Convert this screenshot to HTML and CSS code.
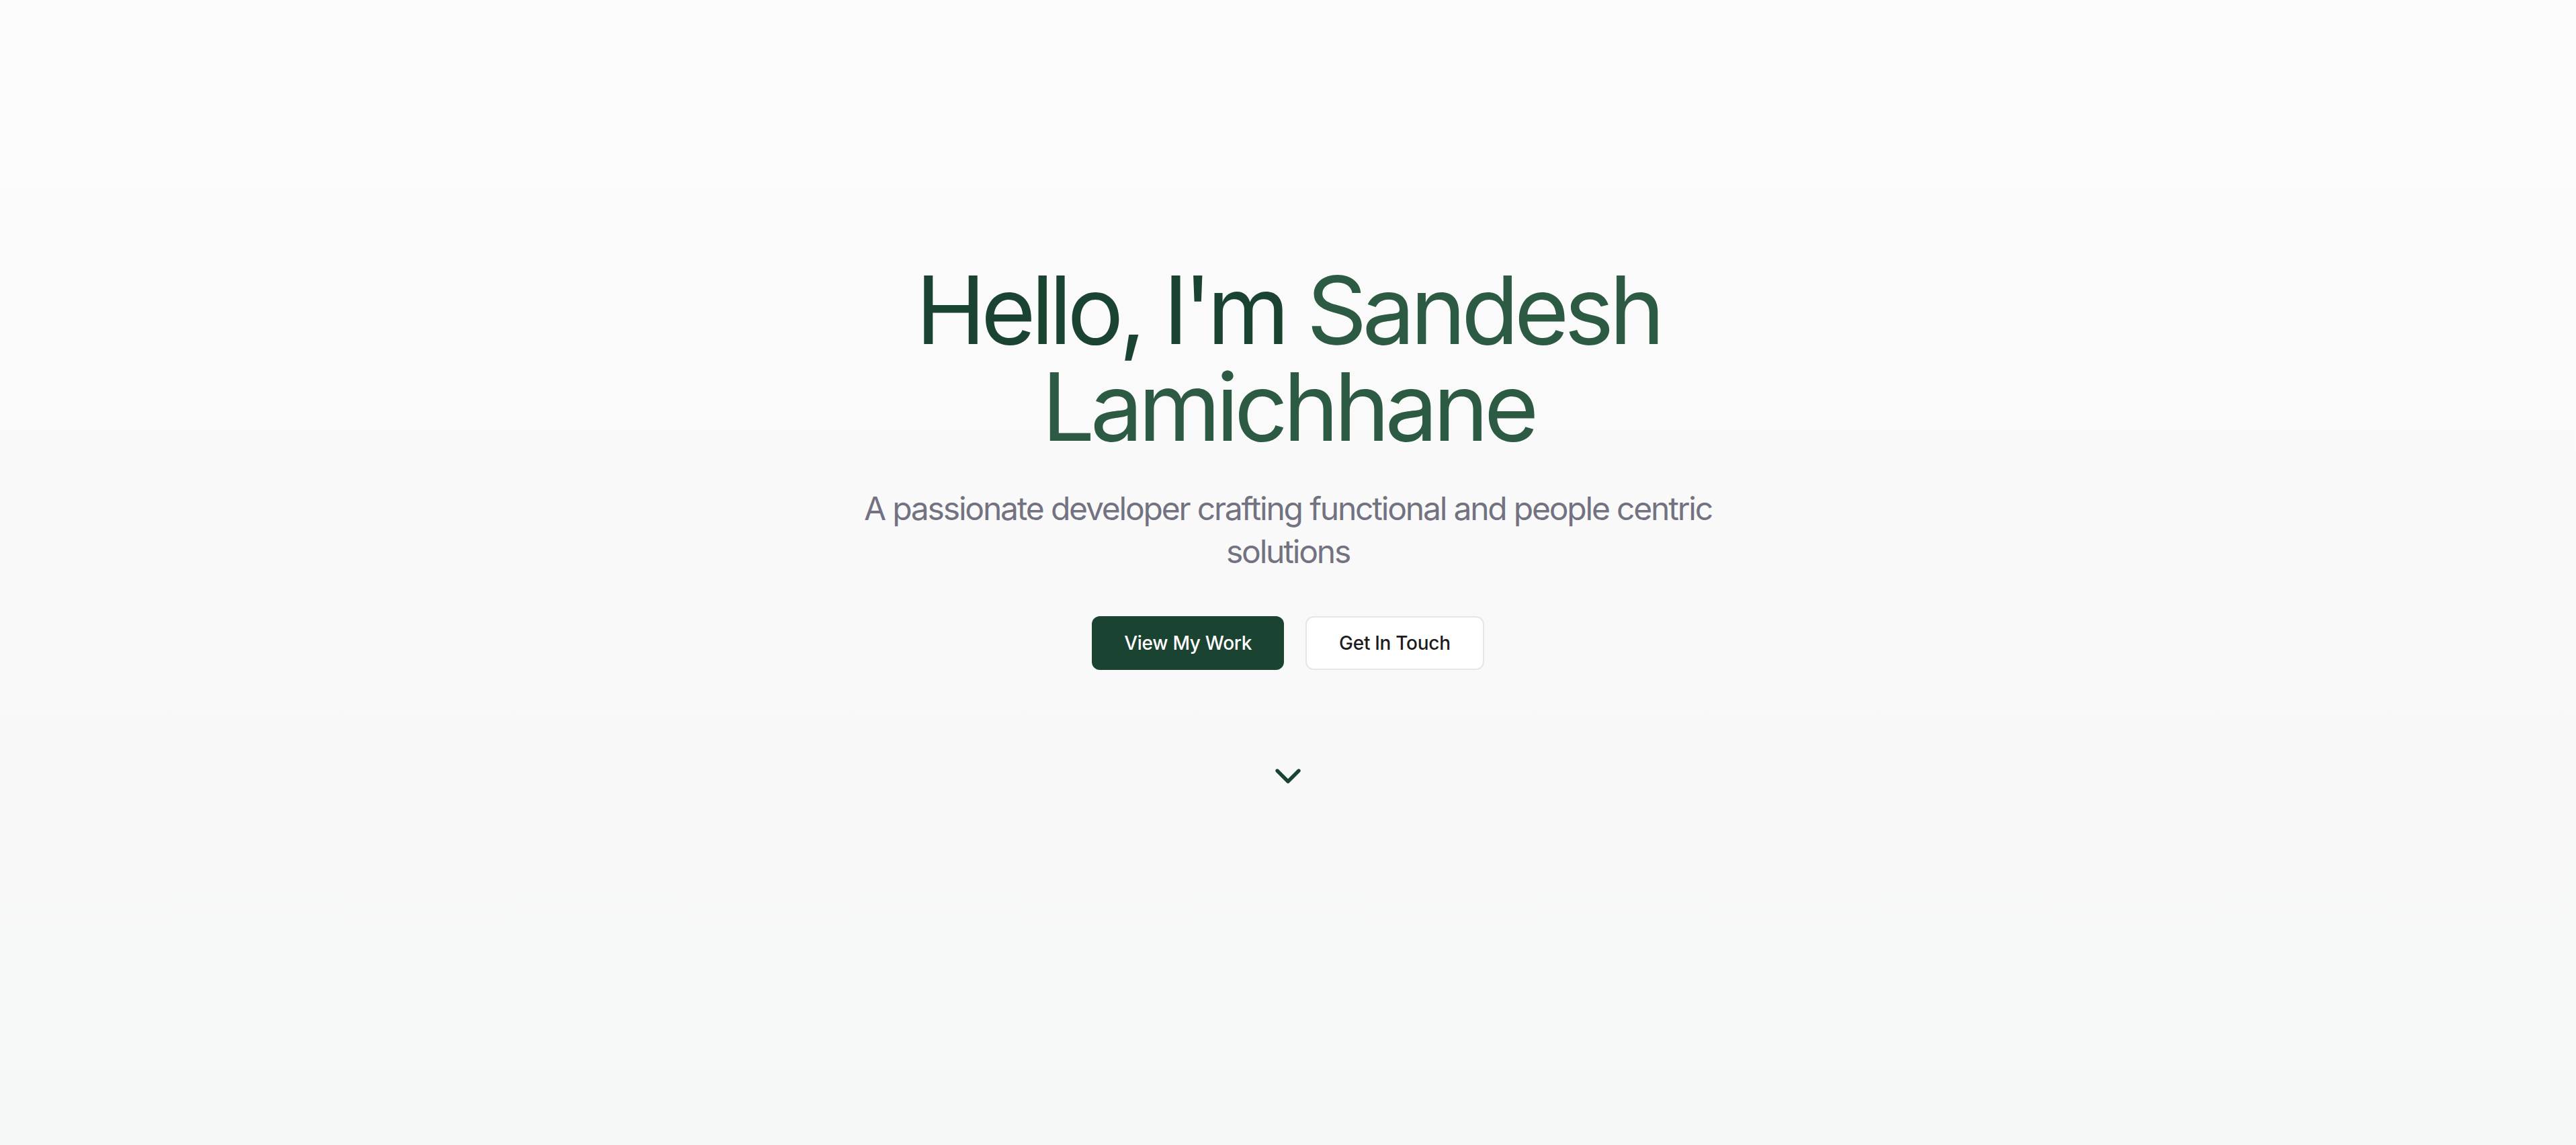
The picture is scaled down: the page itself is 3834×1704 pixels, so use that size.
FILE: index.html
```html
<!DOCTYPE html>
<html lang="en">
<head>
<meta charset="utf-8">
<title>Sandesh Lamichhane</title>
<link rel="stylesheet" href="styles.css">
</head>
<body>
<main class="hero">
  <h1 class="hero-title"><span class="title-dark">Hello, I'm</span> <span class="title-light">Sandesh Lamichhane</span></h1>
  <p class="hero-sub">A passionate developer crafting functional and people centric solutions</p>
  <div class="hero-actions">
    <a class="btn btn-primary" href="#projects">View My Work</a>
    <a class="btn btn-outline" href="#contact">Get In Touch</a>
  </div>
  <a class="scroll-down" href="#about" aria-label="Scroll down">
    <svg width="64" height="64" viewBox="0 0 24 24" fill="none" stroke="currentColor" stroke-width="2" stroke-linecap="round" stroke-linejoin="round"><path d="m6 9 6 6 6-6"/></svg>
  </a>
</main>
</body>
</html>
```

FILE: styles.css
```css
html, body {
  margin: 0;
  padding: 0;
}
body {
  font-family: Inter, "Noto Sans", "Liberation Sans", sans-serif;
  background: linear-gradient(to bottom, #fcfcfc 0%, #f9f9f9 50%, #f6f7f7 100%);
  min-height: 1704px;
}
.hero {
  min-height: 1704px;
  box-sizing: border-box;
  padding-top: 389px;
  display: flex;
  flex-direction: column;
  align-items: center;
  text-align: center;
}
.hero-title {
  margin: 0 0 48px;
  max-width: 1792px;
  font-size: 140px;
  line-height: 144px;
  font-weight: 400;
  letter-spacing: -7px;
}
.title-dark { color: #1b4332; }
.title-light { color: #2d5a43; }
.hero-sub {
  margin: 0 0 64px;
  max-width: 1344px;
  font-size: 48px;
  line-height: 64px;
  letter-spacing: -2.2px;
  color: #727281;
}
.hero-actions {
  display: flex;
  gap: 32px;
}
.btn {
  box-sizing: border-box;
  height: 80px;
  padding: 0 48px;
  display: inline-flex;
  align-items: center;
  justify-content: center;
  border-radius: 12px;
  font-size: 28px;
  font-weight: 500;
  letter-spacing: -0.3px;
  text-decoration: none;
}
.btn-primary {
  background: #1b4332;
  color: #ffffff;
}
.btn-outline {
  background: #ffffff;
  color: #1c1c1f;
  border: 2px solid #e6e6ea;
}
.scroll-down {
  margin-top: 126px;
  width: 64px;
  height: 64px;
  color: #1b4332;
  display: block;
}
.scroll-down svg { display: block; }
```
